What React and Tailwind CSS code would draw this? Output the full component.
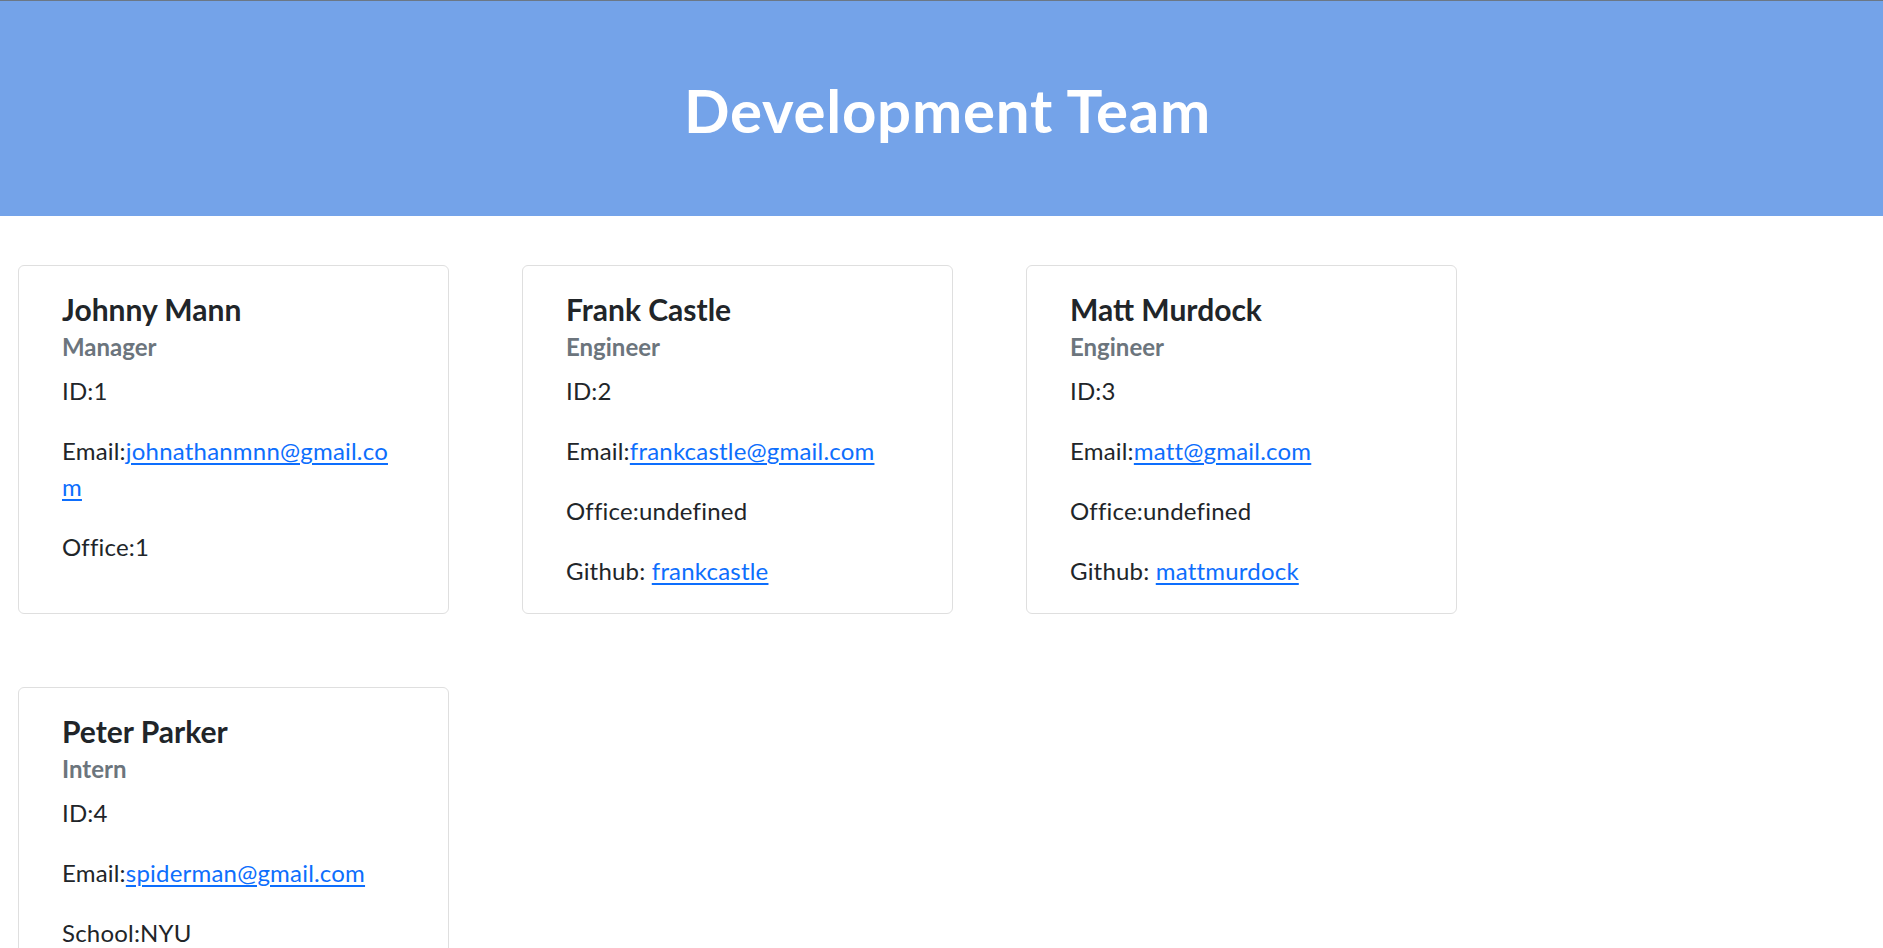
import React from "react";

const people = [
  {
    name: "Johnny Mann",
    role: "Manager",
    id: 1,
    email: "johnathanmnn@gmail.com",
    extra: { label: "Office:", value: "1" },
  },
  {
    name: "Frank Castle",
    role: "Engineer",
    id: 2,
    email: "frankcastle@gmail.com",
    office: "undefined",
    github: "frankcastle",
  },
  {
    name: "Matt Murdock",
    role: "Engineer",
    id: 3,
    email: "matt@gmail.com",
    office: "undefined",
    github: "mattmurdock",
  },
  {
    name: "Peter Parker",
    role: "Intern",
    id: 4,
    email: "spiderman@gmail.com",
    extra: { label: "School:", value: "NYU" },
  },
];

const linkCls = "text-[#0d6efd] underline underline-offset-[3px] decoration-[1.5px]";

function Card({ p }) {
  return (
    <div className="w-[431px] border border-[#dfdfdf] rounded-[6px] bg-white pl-[43px] pr-[43px] pt-[25px] pb-0">
      <h5 className="text-[30px] leading-[36px] font-bold text-[#212529]">{p.name}</h5>
      <h6 className="mt-[6px] text-[24px] leading-[28.8px] font-bold text-[#6c757d]">{p.role}</h6>
      <div className="mt-[11px] text-[24px] leading-[36px] tracking-[0.2px] text-[#212529]">
        <p className="mb-[24px]">ID:{p.id}</p>
        <p className="mb-[24px] break-words">
          Email:<a href="#" className={linkCls}>{p.email}</a>
        </p>
        {p.github ? (
          <>
            <p className="mb-[24px]">Office:{p.office}</p>
            <p className="mb-[24px]">
              Github: <a href="#" className={linkCls}>{p.github}</a>
            </p>
          </>
        ) : (
          <p className="mb-[24px]">
            {p.extra.label}
            {p.extra.value}
          </p>
        )}
      </div>
    </div>
  );
}

export default function App() {
  return (
    <div className="min-h-screen bg-white" style={{ fontFamily: 'Lato, "Open Sans", sans-serif' }}>
      <header className="h-[216px] border-t border-[#6b7785] bg-[#74a3e9] pt-[73px] pl-[12px] text-center">
        <h1 className="text-[60px] leading-[72px] font-bold tracking-[0.75px] text-white">Development Team</h1>
      </header>
      <main className="flex flex-wrap gap-[73px] pl-[18px] pt-[49px] pb-[40px]">
        {people.map((p) => (
          <Card key={p.id} p={p} />
        ))}
      </main>
    </div>
  );
}
